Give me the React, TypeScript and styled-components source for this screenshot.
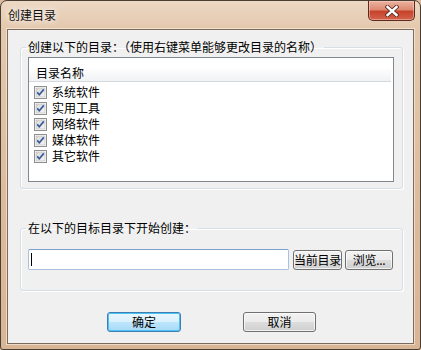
import styled, { createGlobalStyle } from 'styled-components';

const FONT = '"Noto Sans CJK SC", "DejaVu Sans", sans-serif';

const GlobalStyle = createGlobalStyle`
  html, body {
    margin: 0;
    padding: 0;
    background: #dcbb9d;
  }
  * {
    box-sizing: border-box;
  }
`;

const Window = styled.div`
  width: 421px;
  height: 350px;
  display: flex;
  flex-direction: column;
  padding: 0 6px 5px 6px;
  border: 1px solid #4a3e33;
  border-radius: 7px 7px 3px 3px;
  background: linear-gradient(180deg, #ecd8c4 0%, #e4c8ad 28px, #dcbb9c 60%, #d8b595 100%);
  font-family: ${FONT};
  font-size: 12px;
  color: #000;
`;

const TitleBar = styled.div`
  height: 28px;
  display: flex;
  justify-content: space-between;
  align-items: flex-start;
`;

const Title = styled.div`
  margin: 6px 0 0 1px;
  line-height: 16px;
  font-size: 12px;
  color: #111;
  text-shadow: 0 0 6px rgba(255, 255, 255, 0.95), 0 0 10px rgba(255, 255, 255, 0.7);
`;

const CloseButton = styled.button`
  width: 47px;
  height: 20px;
  margin: 0 -1px 0 0;
  padding: 0;
  border: 1px solid #5e2a1f;
  border-top: none;
  border-radius: 0 0 5px 5px;
  background: linear-gradient(180deg, #eab3a0 0%, #dd8a73 45%, #c7432c 55%, #d2624a 100%);
  box-shadow: inset 0 0 0 1px rgba(255, 220, 210, 0.45);
  display: flex;
  align-items: center;
  justify-content: center;
`;

const Client = styled.div`
  flex: 1;
  display: flex;
  flex-direction: column;
  background: #f0f0f0;
  border: 1px solid #7b6b5c;
  box-shadow: 0 0 0 1px rgba(255, 245, 235, 0.55);
  padding: 10px 10px 0 12px;
`;

const Group = styled.fieldset<{ $top: number }>`
  margin: ${(p) => p.$top}px 0 0 0;
  padding: 0;
  border: 1px solid #d5dfe5;
  border-radius: 3px;
  box-shadow: inset 1px 1px 0 #fff, 1px 1px 0 #fff;
  min-width: 0;
`;

const Legend = styled.legend`
  margin-left: 5px;
  padding: 0 2px;
  line-height: 14px;
  font-size: 12px;
`;

const GroupBody = styled.div<{ $pad: string }>`
  padding: ${(p) => p.$pad};
`;

const ListBox = styled.div`
  height: 125px;
  background: #fff;
  border: 1px solid #828790;
  display: flex;
  flex-direction: column;
`;

const ListHeader = styled.div`
  height: 24px;
  margin-right: 2px;
  padding: 8px 0 0 7px;
  line-height: 14px;
  background: linear-gradient(180deg, #ffffff 0%, #ffffff 40%, #f1f2f4 100%);
  border-bottom: 1px solid #d5d8dd;
`;

const ListRows = styled.div`
  padding: 2px 0 0 5px;
  display: flex;
  flex-direction: column;
`;

const Row = styled.div`
  height: 16px;
  display: flex;
  align-items: center;
  gap: 5px;
  line-height: 14px;
`;

const PathRow = styled.div`
  display: flex;
  align-items: flex-start;
  gap: 4px;
`;

const TextBox = styled.div`
  width: 261px;
  height: 21px;
  background: #fff;
  border: 1px solid #a9c1dd;
  border-top-color: #7a9fc9;
  border-radius: 2px;
  padding: 3px 0 0 2px;
`;

const Caret = styled.div`
  width: 1px;
  height: 13px;
  background: #000;
`;

const Button = styled.button<{ $w: number; $default?: boolean; $small?: boolean }>`
  width: ${(p) => p.$w}px;
  height: 20px;
  margin-top: ${(p) => (p.$small ? 1 : 0)}px;
  padding: 0;
  overflow: visible;
  white-space: nowrap;
  font-family: ${FONT};
  font-size: 12px;
  line-height: 14px;
  letter-spacing: ${(p) => (p.$small ? '-0.3px' : '0')};
  color: #000;
  border-radius: 3px;
  border: 1px solid ${(p) => (p.$default ? '#3c7fb1' : '#707070')};
  background: ${(p) =>
    p.$default
      ? 'linear-gradient(180deg, #eaf6fd 0%, #d9f0fc 50%, #bee6fd 51%, #a7d9f5 100%)'
      : 'linear-gradient(180deg, #f2f2f2 0%, #ebebeb 50%, #dddddd 51%, #cfcfcf 100%)'};
  box-shadow: ${(p) =>
    p.$default ? 'inset 0 0 0 1px #4fc2f5' : 'inset 0 0 0 1px rgba(255, 255, 255, 0.7)'};
`;

const SmallButtons = styled.div`
  display: flex;
  gap: 3px;
`;

const Footer = styled.div`
  display: flex;
  justify-content: center;
  gap: 62px;
  margin-top: 21px;
`;

function CheckBox() {
  return (
    <svg width="13" height="13" viewBox="0 0 13 13">
      <defs>
        <linearGradient id="cbfill" x1="0" y1="0" x2="1" y2="1">
          <stop offset="0" stopColor="#d6d6d6" />
          <stop offset="1" stopColor="#f7f7f7" />
        </linearGradient>
      </defs>
      <rect x="0.5" y="0.5" width="12" height="12" fill="#fff" stroke="#8e8f8f" />
      <rect x="2" y="2" width="9" height="9" fill="url(#cbfill)" stroke="#b5b5b5" strokeWidth="0.6" />
      <path d="M3.2 6.4 L5.3 8.8 L9.8 3.4" fill="none" stroke="#3a5a9e" strokeWidth="1.7" />
    </svg>
  );
}

function CloseGlyph() {
  return (
    <svg width="14" height="12" viewBox="0 0 14 12">
      <path d="M2.5 2 L11.5 10 M11.5 2 L2.5 10" stroke="#5a2a22" strokeWidth="4.2" strokeLinecap="square" />
      <path d="M2.5 2 L11.5 10 M11.5 2 L2.5 10" stroke="#ffffff" strokeWidth="2.4" strokeLinecap="square" />
    </svg>
  );
}

const folders = ['系统软件', '实用工具', '网络软件', '媒体软件', '其它软件'];

export default function App() {
  return (
    <>
      <GlobalStyle />
      <Window>
        <TitleBar>
          <Title>创建目录</Title>
          <CloseButton aria-label="关闭">
            <CloseGlyph />
          </CloseButton>
        </TitleBar>
        <Client>
          <Group $top={0}>
            <Legend>创建以下的目录：（使用右键菜单能够更改目录的名称）</Legend>
            <GroupBody $pad="3px 8px 6px 7px">
              <ListBox>
                <ListHeader>目录名称</ListHeader>
                <ListRows>
                  {folders.map((name) => (
                    <Row key={name}>
                      <CheckBox />
                      <span>{name}</span>
                    </Row>
                  ))}
                </ListRows>
              </ListBox>
            </GroupBody>
          </Group>
          <Group $top={32}>
            <Legend>在以下的目标目录下开始创建：</Legend>
            <GroupBody $pad="14px 7px 20px 7px">
              <PathRow>
                <TextBox>
                  <Caret />
                </TextBox>
                <SmallButtons>
                  <Button $w={49} $small>
                    当前目录
                  </Button>
                  <Button $w={48} $small>
                    浏览...
                  </Button>
                </SmallButtons>
              </PathRow>
            </GroupBody>
          </Group>
          <Footer>
            <Button $w={74} $default>
              确定
            </Button>
            <Button $w={73}>取消</Button>
          </Footer>
        </Client>
      </Window>
    </>
  );
}
